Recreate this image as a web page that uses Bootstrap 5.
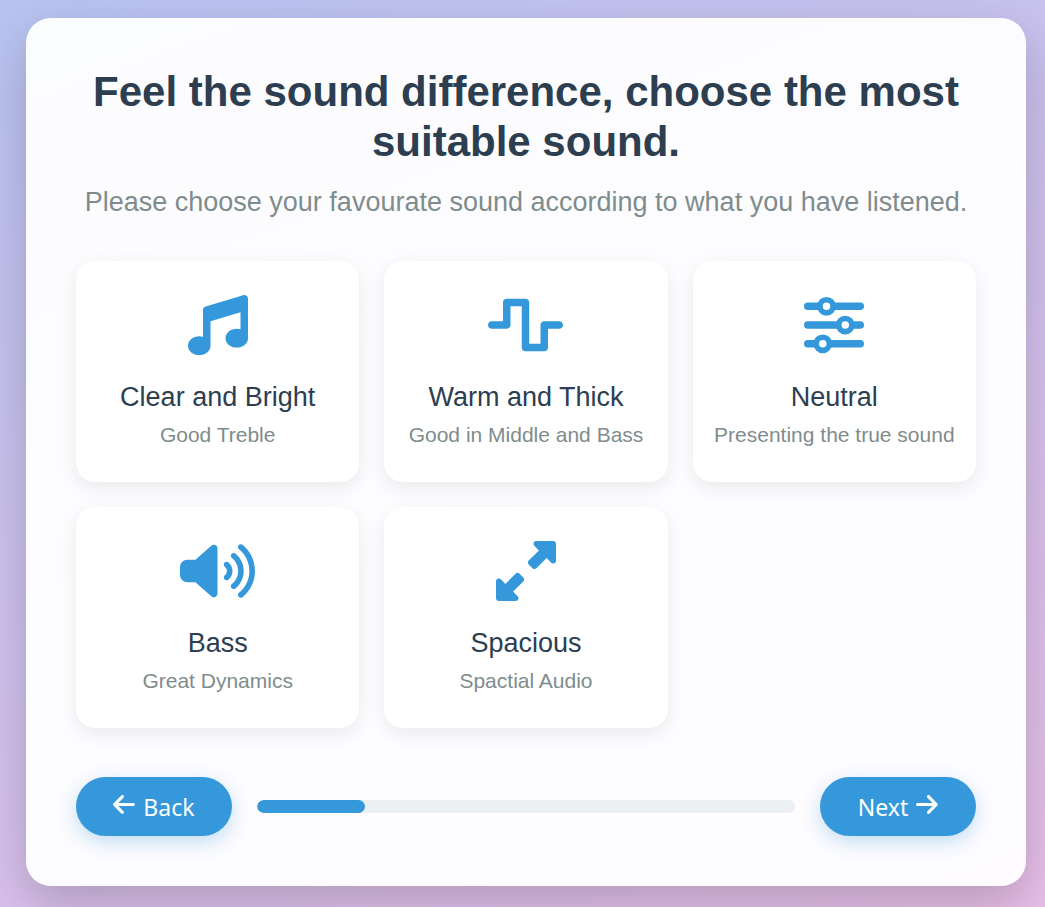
<!DOCTYPE html>
<html lang="en">
<head>
<meta charset="utf-8">
<meta name="viewport" content="width=device-width, initial-scale=1">
<title>Choose your sound</title>
<link href="https://cdn.jsdelivr.net/npm/bootstrap@5.3.0/dist/css/bootstrap.min.css" rel="stylesheet">
<style>
  body {
    font-family: "Liberation Sans", Arial, sans-serif;
    color: #2c3e50;
    background: linear-gradient(157deg, #b8c3f1, #e8bfe9);
  }
  .page-wrap { padding: 18px 19px 21px 26px; }
  .sound-panel {
    max-width: 1000px;
    padding: 49px 50px 50px;
    border-radius: 25px;
    background: linear-gradient(160deg, #fbfdff, #fcfcfe 10%, #fefcff);
    box-shadow: 0 19px 50px rgba(0, 0, 0, .2);
  }
  .panel-title { font-size: 42px; line-height: 50px; margin-bottom: 14px; }
  .panel-intro { font-size: 27px; line-height: 42px; margin-bottom: 38px; color: #7f8c8d; }
  .sound-grid { --bs-gutter-x: 25px; --bs-gutter-y: 25px; margin-bottom: 49px; }
  .sound-option {
    min-height: 221px;
    padding: 34px 12px 30px;
    border: 0;
    border-radius: 19px;
    background: #fff;
    box-shadow: 0 6px 19px rgba(0, 0, 0, .08);
    color: #2c3e50;
  }
  .sound-option svg { height: 60px; fill: #3498db; margin-bottom: 24px; }
  .option-name { font-size: 27px; line-height: 36px; margin-bottom: 5px; }
  .option-note { font-size: 21px; line-height: 30px; color: #7f8c8d; }
  .nav-pill {
    --bs-btn-color: #fff;
    --bs-btn-bg: #3498db;
    --bs-btn-hover-color: #fff;
    --bs-btn-hover-bg: #2980b9;
    --bs-btn-active-color: #fff;
    --bs-btn-active-bg: #2980b9;
    width: 156px;
    height: 59px;
    border: 0;
    font-family: "Noto Sans", sans-serif;
    font-size: 23px;
    line-height: 30px;
    box-shadow: 0 6px 19px rgba(52, 152, 219, .3);
  }
  .nav-pill svg { height: 25px; fill: currentColor; margin-bottom: 4px; }
  .step-progress { --bs-progress-height: 13px; --bs-progress-bg: #ecf0f1; --bs-progress-bar-bg: #3498db; --bs-progress-border-radius: 7px; margin: 0 25px; }
</style>
</head>
<body>
<div class="page-wrap min-vh-100 d-flex justify-content-center align-items-center">
  <main class="sound-panel w-100">
    <header class="text-center">
      <h1 class="panel-title fw-bold">Feel the sound difference, choose the most suitable sound.</h1>
      <p class="panel-intro">Please choose your favourate sound according to what you have listened.</p>
    </header>

    <div class="sound-grid row row-cols-1 row-cols-sm-2 row-cols-md-3">
      <div class="col">
        <button type="button" class="sound-option w-100 h-100 d-flex flex-column align-items-center">
          <svg viewBox="0 0 512 512" aria-hidden="true"><path d="M499.1 6.3c8.1 6 12.9 15.6 12.9 25.7v72V368c0 44.2-43 80-96 80s-96-35.8-96-80s43-80 96-80c11.2 0 22 1.6 32 4.6V147L192 223.8V432c0 44.2-43 80-96 80s-96-35.8-96-80s43-80 96-80c11.2 0 22 1.6 32 4.6V200 128c0-14.1 9.3-26.6 22.8-30.7l320-96c9.7-2.9 20.2-1.1 28.3 5z"/></svg>
          <span class="option-name">Clear and Bright</span>
          <span class="option-note">Good Treble</span>
        </button>
      </div>
      <div class="col">
        <button type="button" class="sound-option w-100 h-100 d-flex flex-column align-items-center">
          <svg viewBox="0 0 640 512" aria-hidden="true"><path d="M128 64c0-17.7 14.3-32 32-32H320c17.7 0 32 14.3 32 32V416h96V256c0-17.7 14.3-32 32-32H608c17.7 0 32 14.3 32 32s-14.3 32-32 32H512V448c0 17.7-14.3 32-32 32H320c-17.7 0-32-14.3-32-32V96H192V256c0 17.7-14.3 32-32 32H32c-17.7 0-32-14.3-32-32s14.3-32 32-32h96V64z"/></svg>
          <span class="option-name">Warm and Thick</span>
          <span class="option-note">Good in Middle and Bass</span>
        </button>
      </div>
      <div class="col">
        <button type="button" class="sound-option w-100 h-100 d-flex flex-column align-items-center">
          <svg viewBox="0 0 512 512" aria-hidden="true">
            <path d="M32 96H480M32 256H480M32 416H480" fill="none" stroke="#3498db" stroke-width="64" stroke-linecap="round"/>
            <g fill="#fff" stroke="#3498db" stroke-width="48"><circle cx="192" cy="96" r="56"/><circle cx="352" cy="256" r="56"/><circle cx="160" cy="416" r="56"/></g>
          </svg>
          <span class="option-name">Neutral</span>
          <span class="option-note">Presenting the true sound</span>
        </button>
      </div>
      <div class="col">
        <button type="button" class="sound-option w-100 h-100 d-flex flex-column align-items-center">
          <svg viewBox="0 0 640 512" aria-hidden="true"><path d="M533.6 32.5C598.5 85.3 640 165.8 640 256s-41.5 170.8-106.4 223.5c-10.3 8.4-25.4 6.8-33.8-3.5s-6.8-25.4 3.5-33.8C557.5 398.2 592 331.2 592 256s-34.5-142.2-88.7-186.3c-10.3-8.4-11.8-23.5-3.5-33.8s23.5-11.8 33.8-3.5zM473.1 107c43.2 35.2 70.9 88.9 70.9 149s-27.7 113.8-70.9 149c-10.3 8.4-25.4 6.8-33.8-3.5s-6.8-25.4 3.5-33.8C475.3 341.3 496 301.1 496 256s-20.7-85.3-53.2-111.8c-10.3-8.4-11.8-23.5-3.5-33.8s23.5-11.8 33.8-3.5zm-60.5 74.5C434.1 199.1 448 225.9 448 256s-13.9 56.9-35.4 74.5c-10.3 8.4-25.4 6.8-33.8-3.5s-6.8-25.4 3.5-33.8C393.1 284.4 400 271 400 256s-6.9-28.4-17.7-37.3c-10.3-8.4-11.8-23.5-3.5-33.8s23.5-11.8 33.8-3.5zM301.1 34.8C312.6 40 320 51.4 320 64V448c0 12.6-7.4 24-18.9 29.2s-25 3.1-34.4-5.3L131.8 352H64c-35.3 0-64-28.7-64-64V224c0-35.3 28.7-64 64-64h67.8L266.7 40.1c9.4-8.4 22.9-10.4 34.4-5.3z"/></svg>
          <span class="option-name">Bass</span>
          <span class="option-note">Great Dynamics</span>
        </button>
      </div>
      <div class="col">
        <button type="button" class="sound-option w-100 h-100 d-flex flex-column align-items-center">
          <svg viewBox="0 0 512 512" aria-hidden="true"><path d="M344 0H488c13.3 0 24 10.7 24 24V168c0 9.7-5.8 18.5-14.8 22.2s-19.3 1.7-26.2-5.2l-39-39-87 87c-9.4 9.4-24.6 9.4-33.9 0l-32-32c-9.4-9.4-9.4-24.6 0-33.9l87-87L327 41c-6.9-6.9-8.9-17.2-5.2-26.2S334.3 0 344 0zM168 512H24c-13.3 0-24-10.7-24-24V344c0-9.7 5.8-18.5 14.8-22.2s19.3-1.7 26.2 5.2l39 39 87-87c9.4-9.4 24.6-9.4 33.9 0l32 32c9.4 9.4 9.4 24.6 0 33.9l-87 87 39 39c6.9 6.9 8.9 17.2 5.2 26.2s-12.5 14.8-22.2 14.8z"/></svg>
          <span class="option-name">Spacious</span>
          <span class="option-note">Spactial Audio</span>
        </button>
      </div>
    </div>

    <div class="d-flex align-items-center">
      <button type="button" class="nav-pill btn rounded-pill d-flex align-items-center justify-content-center gap-2 flex-shrink-0">
        <svg viewBox="0 0 448 512" aria-hidden="true"><path d="M9.4 233.4c-12.5 12.5-12.5 32.8 0 45.3l160 160c12.5 12.5 32.8 12.5 45.3 0s12.5-32.8 0-45.3L109.2 288 416 288c17.7 0 32-14.3 32-32s-14.3-32-32-32l-306.7 0L214.6 118.6c12.5-12.5 12.5-32.8 0-45.3s-32.8-12.5-45.3 0l-160 160z"/></svg>
        Back
      </button>
      <div class="step-progress progress flex-grow-1" role="progressbar" aria-label="Progress" aria-valuenow="20" aria-valuemin="0" aria-valuemax="100">
        <div class="progress-bar rounded-pill" style="width: 20%"></div>
      </div>
      <button type="button" class="nav-pill btn rounded-pill d-flex align-items-center justify-content-center gap-2 flex-shrink-0">
        Next
        <svg viewBox="0 0 448 512" aria-hidden="true"><path d="M438.6 278.6c12.5-12.5 12.5-32.8 0-45.3l-160-160c-12.5-12.5-32.8-12.5-45.3 0s-12.5 32.8 0 45.3L338.8 224 32 224c-17.7 0-32 14.3-32 32s14.3 32 32 32l306.7 0L233.4 393.4c-12.5 12.5-12.5 32.8 0 45.3s32.8 12.5 45.3 0l160-160z"/></svg>
      </button>
    </div>
  </main>
</div>
<script src="https://cdn.jsdelivr.net/npm/bootstrap@5.3.0/dist/js/bootstrap.bundle.min.js"></script>
</body>
</html>
